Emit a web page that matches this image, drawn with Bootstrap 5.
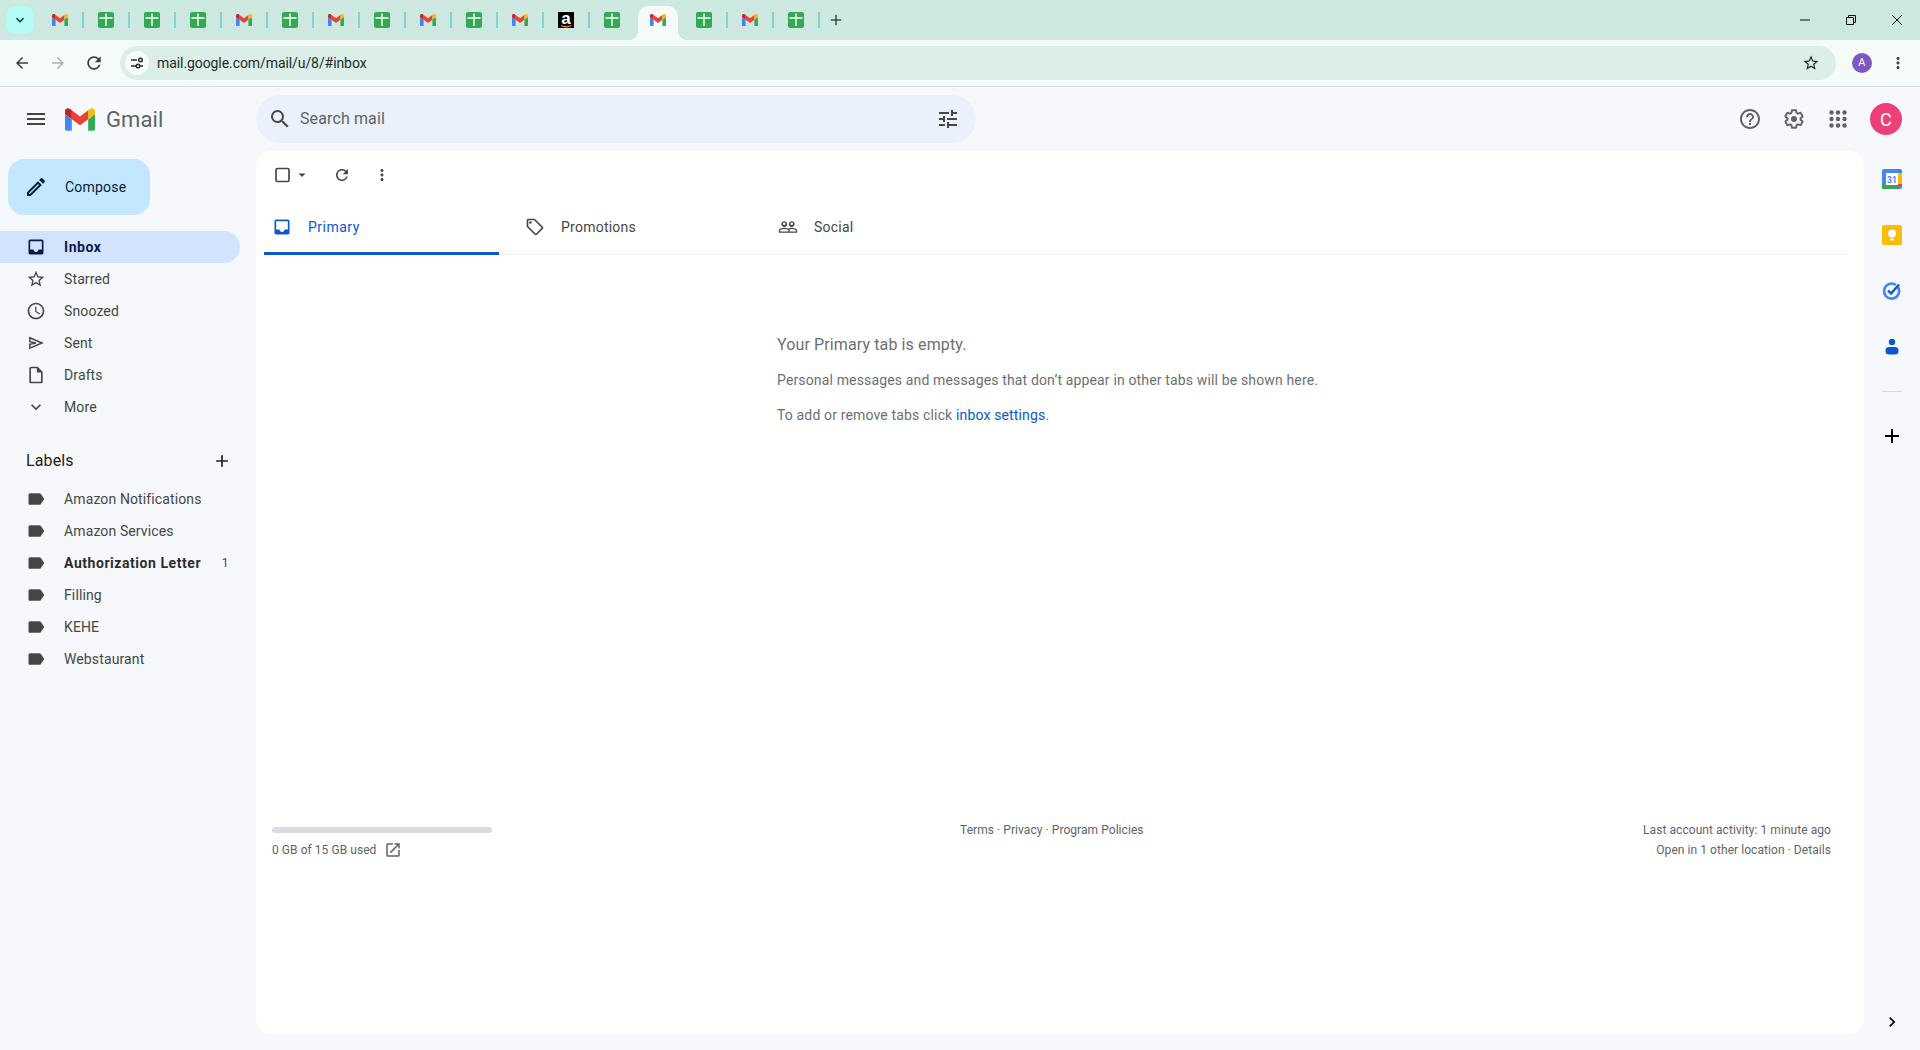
<!DOCTYPE html>
<html lang="en">
<head>
<meta charset="UTF-8">
<title>Inbox - Gmail</title>
<link href="https://cdn.jsdelivr.net/npm/bootstrap@5.3.0/dist/css/bootstrap.min.css" rel="stylesheet">
<style>
body { background: #f6f8fc; font-family: Roboto, "Liberation Sans", sans-serif; font-size: 14px; letter-spacing: .12px; color: #444746; height: 1050px; overflow: hidden; }
svg { display: block; flex: none; fill: currentColor; }

/* browser chrome */
.tabstrip { height: 40px; background: #cde8e1; padding-left: 37px; }
.tab-toggle { position: absolute; left: 6px; top: 6px; width: 28px; height: 28px; border-radius: 10px; background: #b3fcf3; color: #1f2a28; }
.tab-item { position: relative; width: 46px; height: 40px; }
.tab-item.with-sep::after { content: ""; position: absolute; right: -1px; top: 12px; width: 2px; height: 16px; background: #7bd8cd; }
.tab-item.is-current::before { content: ""; position: absolute; left: 3px; right: 3px; top: 6px; bottom: 0; background: #f4fbf8; border-radius: 10px 10px 0 0; }
.tab-item > svg { position: relative; z-index: 1; }
.amz-ico { position: relative; width: 16px; height: 16px; background: #000; color: #fff; font-family: "Liberation Sans", sans-serif; font-weight: 700; font-size: 17px; line-height: 14px; text-align: center; letter-spacing: 0; }
.amz-ico svg { position: absolute; left: 2px; bottom: 0; }
.flare { position: absolute; bottom: 0; width: 10px; height: 10px; }
.flare-l { left: -7px; background: radial-gradient(circle at 0 0, transparent 10px, #f4fbf8 10.5px); }
.flare-r { right: -7px; background: radial-gradient(circle at 100% 0, transparent 10px, #f4fbf8 10.5px); }
.tab-plus { width: 34px; color: #3f4b48; }
.win-btn { width: 46px; color: #111; }
.chromebar { height: 47px; background: #f4fbf8; border-bottom: 1px solid #d8e4df; border-radius: 8px 8px 0 0; color: #36423f; }
.nav-ico { width: 36px; }
.nav-ico.is-off { color: #a9b3b0; }
.omnibox { height: 34px; background: #dceee8; border-radius: 17px; margin-left: 8px; padding-left: 5px; width: 1716px; letter-spacing: -.08px; color: #1f2a28; }
.site-chip { width: 24px; height: 24px; background: #f4fbf8; border-radius: 50%; margin-right: 8px; }
.site-chip svg { fill: none; }
.omni-star { margin-left: auto; margin-right: 16px; }
.acct-dot { width: 20px; height: 20px; border-radius: 50%; background: #7e57c2; color: #fff; font-size: 11px; margin-left: 16px; }
.chrome-menu { margin-left: 17px; }

/* gmail header */
.mail-top { height: 64px; }
.brand-zone { width: 256px; padding-left: 24px; }
.burger { color: #444746; margin-right: 17px; }
.wordmark { font-size: 22px; color: #5f6368; margin-left: 11px; }
.searchbox { width: 720px; height: 48px; background: #eaf1fb; border-radius: 24px; padding: 0 16px 0 12px; font-size: 16px; color: #5f6368; }
.searchbox .q-text { margin-left: 8px; }
.searchbox svg { fill: #444746; }
.top-actions { margin-left: auto; color: #5f6368; }
.top-act { width: 44px; }
.user-chip { width: 32px; height: 32px; border-radius: 50%; background: #ee3f79; color: #fff; font-size: 18px; margin: 0 18px 0 10px; }

/* sidebar */
.mail-side { width: 256px; flex: none; }
.compose-btn { width: 142px; height: 56px; margin: 8px 0 16px 8px; background: #c2e7ff; border-radius: 16px; color: #001d35; padding-left: 16px; gap: 17px; letter-spacing: .2px; }
.side-row { height: 32px; width: 240px; padding-left: 26px; gap: 18px; border-radius: 0 16px 16px 0; color: #444746; }
.side-row.is-active { background: #d3e3fd; color: #041e49; font-weight: 700; letter-spacing: .55px; }
.side-row.has-unread { font-weight: 700; color: #2b2d30; letter-spacing: .55px; }
.has-unread svg { color: #444746; }
.unread-num { margin-left: auto; margin-right: 11px; font-size: 12px; font-weight: 400; color: #444746; }
.labels-head { height: 40px; margin-top: 18px; margin-bottom: 2px; width: 240px; padding: 0 8px 0 26px; font-size: 16px; color: #1f1f1f; }

/* main card */
.mail-card { flex: 1; background: #fff; border-radius: 16px; margin-bottom: 16px; }
.mail-tools { height: 48px; padding-left: 19px; color: #444746; }
.tool-caret { margin-left: 1px; }
.tool-refresh { margin-left: 25px; }
.tool-more { margin-left: 22px; }
.mail-tabs { height: 56px; margin: 0 16px 0 8px; border-bottom: 1px solid #eceff1; }
.mail-tab { width: 235px; margin-right: 18px; height: 56px; padding-left: 8px; gap: 16px; color: #444746; letter-spacing: .24px; }
.mail-tab.is-active { color: #0b57d0; border-bottom: 3px solid #0b57d0; padding-top: 3px; letter-spacing: .5px; }
.empty-note { padding: 80px 0 0 521px; color: #6b6f74; line-height: 20px; letter-spacing: .15px; }
.empty-note p { margin: 0 0 15px; }
.empty-note .note-title { font-size: 16px; letter-spacing: .12px; }
.empty-note a { color: #0b57d0; text-decoration: none; }
.mail-foot { margin-top: 395px; padding-left: 16px; padding-right: 33px; font-size: 12px; letter-spacing: .06px; color: #5f6368; line-height: 20px; }
.quota-col { width: 220px; margin-right: 468px; }
.quota-bar { height: 6px; background: #dadce0; border-radius: 3px; margin-top: 7px; margin-bottom: 7px; }

/* right rail */
.mail-rail { width: 56px; flex: none; padding-bottom: 3px; margin-bottom: 15px; }
.rail-app { height: 56px; width: 52px; }
.rail-line { width: 20px; height: 1px; background: #dadce0; margin: 16px 16px 32px; }
</style>
</head>
<body class="d-flex flex-column position-relative">

<svg width="0" height="0" class="position-absolute">
  <symbol id="i-gmail" viewBox="52 42 88 66">
    <path fill="#4285f4" d="M58 108h14V74L52 59v43c0 3.32 2.69 6 6 6"/>
    <path fill="#34a853" d="M120 108h14c3.32 0 6-2.69 6-6V59l-20 15"/>
    <path fill="#fbbc04" d="M120 48v26l20-15v-8c0-7.42-8.47-11.65-14.4-7.2"/>
    <path fill="#ea4335" d="M72 74V48l24 18 24-18v26L96 92"/>
    <path fill="#c5221f" d="M52 51v8l20 15V48l-5.6-4.2c-5.94-4.45-14.4-.22-14.4 7.2"/>
  </symbol>
  <symbol id="i-sheet" viewBox="0 0 16 16">
    <rect width="16" height="16" rx="2" fill="#34a853"/>
    <path fill="#fff" d="M7.3 1.5h1.4v3.8h5.8v1.4H8.7V14H7.3V6.7H1.5V5.3h5.8z"/>
  </symbol>
  <symbol id="i-star" viewBox="0 0 24 24"><path d="M22 9.24l-7.19-.62L12 2 9.19 8.63 2 9.24l5.46 4.73L5.82 21 12 17.27 18.18 21l-1.63-7.03L22 9.24zM12 15.4l-3.76 2.27 1-4.28-3.32-2.88 4.38-.38L12 6.1l1.71 4.04 4.38.38-3.32 2.88 1 4.28L12 15.4z"/></symbol>
  <symbol id="i-inbox" viewBox="0 0 24 24"><path d="M19 3H5c-1.1 0-2 .9-2 2v14c0 1.1.9 2 2 2h14c1.1 0 2-.9 2-2V5c0-1.1-.9-2-2-2zm0 12h-4c0 1.66-1.35 3-3 3s-3-1.34-3-3H5V5h14v10z"/></symbol>
  <symbol id="i-label" viewBox="0 0 24 24"><path d="M17.63 5.84C17.27 5.33 16.67 5 16 5L5 5.01C3.9 5.01 3 5.9 3 7v10c0 1.1.9 1.99 2 1.99L16 19c.67 0 1.27-.33 1.63-.84L22 12l-4.37-6.16z"/></symbol>
  <symbol id="i-add" viewBox="0 0 24 24"><path d="M19 13h-6v6h-2v-6H5v-2h6V5h2v6h6v2z"/></symbol>
  <symbol id="i-dots" viewBox="0 0 24 24"><path d="M12 8c1.1 0 2-.9 2-2s-.9-2-2-2-2 .9-2 2 .9 2 2 2zm0 2c-1.1 0-2 .9-2 2s.9 2 2 2 2-.9 2-2-.9-2-2-2zm0 6c-1.1 0-2 .9-2 2s.9 2 2 2 2-.9 2-2-.9-2-2-2z"/></symbol>
  <symbol id="i-reload" viewBox="0 0 24 24"><path d="M17.65 6.35C16.2 4.9 14.21 4 12 4c-4.42 0-7.99 3.58-7.99 8s3.57 8 7.99 8c3.73 0 6.84-2.55 7.73-6h-2.08c-.82 2.33-3.04 4-5.65 4-3.31 0-6-2.69-6-6s2.69-6 6-6c1.66 0 3.14.69 4.22 1.78L13 11h7V4l-2.35 2.35z"/></symbol>
</svg>

<!-- tab strip -->
<div class="tabstrip d-flex align-items-center">
  <div class="tab-toggle d-flex align-items-center justify-content-center">
    <svg width="16" height="16" viewBox="0 0 24 24"><path d="M16.59 8.59L12 13.17 7.41 8.59 6 10l6 6 6-6z"/></svg>
  </div>
  <div class="tab-item with-sep d-flex align-items-center justify-content-center"><svg width="16" height="16"><use href="#i-gmail"/></svg></div>
  <div class="tab-item with-sep d-flex align-items-center justify-content-center"><svg width="16" height="16"><use href="#i-sheet"/></svg></div>
  <div class="tab-item with-sep d-flex align-items-center justify-content-center"><svg width="16" height="16"><use href="#i-sheet"/></svg></div>
  <div class="tab-item with-sep d-flex align-items-center justify-content-center"><svg width="16" height="16"><use href="#i-sheet"/></svg></div>
  <div class="tab-item with-sep d-flex align-items-center justify-content-center"><svg width="16" height="16"><use href="#i-gmail"/></svg></div>
  <div class="tab-item with-sep d-flex align-items-center justify-content-center"><svg width="16" height="16"><use href="#i-sheet"/></svg></div>
  <div class="tab-item with-sep d-flex align-items-center justify-content-center"><svg width="16" height="16"><use href="#i-gmail"/></svg></div>
  <div class="tab-item with-sep d-flex align-items-center justify-content-center"><svg width="16" height="16"><use href="#i-sheet"/></svg></div>
  <div class="tab-item with-sep d-flex align-items-center justify-content-center"><svg width="16" height="16"><use href="#i-gmail"/></svg></div>
  <div class="tab-item with-sep d-flex align-items-center justify-content-center"><svg width="16" height="16"><use href="#i-sheet"/></svg></div>
  <div class="tab-item with-sep d-flex align-items-center justify-content-center"><svg width="16" height="16"><use href="#i-gmail"/></svg></div>
  <div class="tab-item with-sep d-flex align-items-center justify-content-center">
    <div class="amz-ico">a<svg width="12" height="3" viewBox="0 0 12 3"><path d="M1 .6c3 1.5 7 1.5 10 0" fill="none" stroke="#f90" stroke-width="1.1"/></svg></div>
  </div>
  <div class="tab-item d-flex align-items-center justify-content-center"><svg width="16" height="16"><use href="#i-sheet"/></svg></div>
  <div class="tab-item is-current d-flex align-items-center justify-content-center">
    <span class="flare flare-l"></span><span class="flare flare-r"></span>
    <svg width="16" height="16"><use href="#i-gmail"/></svg>
  </div>
  <div class="tab-item with-sep d-flex align-items-center justify-content-center"><svg width="16" height="16"><use href="#i-sheet"/></svg></div>
  <div class="tab-item with-sep d-flex align-items-center justify-content-center"><svg width="16" height="16"><use href="#i-gmail"/></svg></div>
  <div class="tab-item with-sep d-flex align-items-center justify-content-center"><svg width="16" height="16"><use href="#i-sheet"/></svg></div>
  <div class="tab-plus d-flex justify-content-center"><svg width="18" height="18"><use href="#i-add"/></svg></div>

  <div class="ms-auto d-flex">
    <div class="win-btn d-flex justify-content-center"><svg width="12" height="12" viewBox="0 0 12 12"><path d="M1 6h10" stroke="currentColor" fill="none"/></svg></div>
    <div class="win-btn d-flex justify-content-center"><svg width="12" height="12" viewBox="0 0 12 12"><path d="M1.5 3.5h7v7h-7zM3.5 3.5v-2h7v7h-2" stroke="currentColor" fill="none"/></svg></div>
    <div class="win-btn d-flex justify-content-center"><svg width="12" height="12" viewBox="0 0 12 12"><path d="M1 1l10 10M11 1L1 11" stroke="currentColor" fill="none"/></svg></div>
  </div>
</div>

<!-- address bar -->
<div class="chromebar d-flex align-items-center ps-1">
  <div class="nav-ico d-flex justify-content-center"><svg width="18" height="18" viewBox="0 0 24 24"><path d="M20 11H7.83l5.59-5.59L12 4l-8 8 8 8 1.41-1.41L7.83 13H20v-2z"/></svg></div>
  <div class="nav-ico is-off d-flex justify-content-center"><svg width="18" height="18" viewBox="0 0 24 24"><path d="M12 4l-1.41 1.41L16.17 11H4v2h12.17l-5.58 5.59L12 20l8-8z"/></svg></div>
  <div class="nav-ico d-flex justify-content-center"><svg width="20" height="20"><use href="#i-reload"/></svg></div>
  <div class="omnibox d-flex align-items-center">
    <span class="site-chip d-flex align-items-center justify-content-center">
      <svg width="14" height="14" viewBox="0 0 14 14" stroke="currentColor" stroke-width="1.4"><path d="M1 4h6M10 10h3M1 10h5"/><circle cx="10.5" cy="4" r="1.8"/><circle cx="8" cy="10" r="1.8"/></svg>
    </span>
    <span>mail.google.com/mail/u/8/#inbox</span>
    <svg class="omni-star" width="18" height="18"><use href="#i-star"/></svg>
  </div>
  <span class="acct-dot d-flex align-items-center justify-content-center">A</span>
  <svg class="chrome-menu" width="18" height="18"><use href="#i-dots"/></svg>
</div>

<!-- gmail header -->
<header class="mail-top d-flex align-items-center">
  <div class="brand-zone d-flex align-items-center">
    <svg class="burger" width="24" height="24" viewBox="0 0 24 24"><path d="M3 18h18v-2H3v2zm0-5h18v-2H3v2zm0-7v2h18V6H3z"/></svg>
    <svg width="30" height="23"><use href="#i-gmail"/></svg>
    <span class="wordmark">Gmail</span>
  </div>
  <div class="searchbox d-flex align-items-center">
    <svg width="24" height="24" viewBox="0 0 24 24"><path d="M15.5 14h-.79l-.28-.27A6.47 6.47 0 0 0 16 9.5 6.5 6.5 0 1 0 9.5 16c1.61 0 3.09-.59 4.23-1.57l.27.28v.79l5 4.99L20.49 19l-4.99-5zm-6 0C7.01 14 5 11.99 5 9.5S7.01 5 9.5 5 14 7.01 14 9.5 11.99 14 9.5 14z"/></svg>
    <span class="q-text">Search mail</span>
    <svg class="ms-auto" width="24" height="24" viewBox="0 0 24 24"><path d="M3 17v2h6v-2H3zM3 5v2h10V5H3zm10 16v-2h8v-2h-8v-2h-2v6h2zM7 9v2H3v2h4v2h2V9H7zm14 4v-2H11v2h10zm-6-4h2V7h4V5h-4V3h-2v6z"/></svg>
  </div>
  <div class="top-actions d-flex align-items-center">
    <div class="top-act d-flex justify-content-center"><svg width="24" height="24" viewBox="0 0 24 24"><path d="M11 18h2v-2h-2v2zm1-16C6.48 2 2 6.48 2 12s4.48 10 10 10 10-4.48 10-10S17.52 2 12 2zm0 18c-4.41 0-8-3.59-8-8s3.59-8 8-8 8 3.59 8 8-3.59 8-8 8zm0-14c-2.21 0-4 1.79-4 4h2c0-1.1.9-2 2-2s2 .9 2 2c0 2-3 1.75-3 5h2c0-2.25 3-2.5 3-5 0-2.21-1.79-4-4-4z"/></svg></div>
    <div class="top-act d-flex justify-content-center"><svg width="24" height="24" viewBox="0 0 24 24"><g transform="translate(1.4 1.4) scale(.883)"><path fill="none" stroke="currentColor" stroke-width="2.2" d="M19.43 12.98c.04-.32.07-.64.07-.98s-.03-.66-.07-.98l2.11-1.65c.19-.15.24-.42.12-.64l-2-3.46c-.12-.22-.39-.3-.61-.22l-2.49 1c-.52-.4-1.08-.73-1.69-.98l-.38-2.65C14.46 2.18 14.25 2 14 2h-4c-.25 0-.46.18-.49.42l-.38 2.65c-.61.25-1.17.59-1.69.98l-2.49-1c-.23-.09-.49 0-.61.22l-2 3.46c-.13.22-.07.49.12.64l2.11 1.65c-.04.32-.07.65-.07.98s.03.66.07.98l-2.11 1.65c-.19.15-.24.42-.12.64l2 3.46c.12.22.39.3.61.22l2.49-1c.52.4 1.08.73 1.69.98l.38 2.65c.03.24.24.42.49.42h4c.25 0 .46-.18.49-.42l.38-2.65c.61-.25 1.17-.59 1.69-.98l2.49 1c.23.09.49 0 .61-.22l2-3.46c.12-.22.07-.49-.12-.64l-2.11-1.65z"/></g><circle cx="12" cy="12" r="3"/></svg></div>
    <div class="top-act d-flex justify-content-center"><svg width="24" height="24" viewBox="0 0 24 24"><circle cx="5.5" cy="5.5" r="2.2"/><circle cx="12" cy="5.5" r="2.2"/><circle cx="18.5" cy="5.5" r="2.2"/><circle cx="5.5" cy="12" r="2.2"/><circle cx="12" cy="12" r="2.2"/><circle cx="18.5" cy="12" r="2.2"/><circle cx="5.5" cy="18.5" r="2.2"/><circle cx="12" cy="18.5" r="2.2"/><circle cx="18.5" cy="18.5" r="2.2"/></svg></div>
    <span class="user-chip d-flex align-items-center justify-content-center">C</span>
  </div>
</header>

<div class="d-flex flex-grow-1 overflow-hidden">
  <!-- sidebar -->
  <aside class="mail-side">
    <div class="compose-btn d-flex align-items-center">
      <svg width="24" height="24" viewBox="0 0 24 24"><path d="M3 17.25V21h3.75L17.81 9.94l-3.75-3.75L3 17.25zM5.92 19H5v-.92l9.06-9.06.92.92L5.92 19zM20.71 5.63l-2.34-2.34c-.2-.2-.45-.29-.71-.29s-.51.1-.7.29l-1.83 1.83 3.75 3.75 1.83-1.83c.39-.39.39-1.02 0-1.41z"/></svg>
      <span>Compose</span>
    </div>
    <div class="side-row is-active d-flex align-items-center"><svg width="20" height="20"><use href="#i-inbox"/></svg><span>Inbox</span></div>
    <div class="side-row d-flex align-items-center"><svg width="20" height="20"><use href="#i-star"/></svg><span>Starred</span></div>
    <div class="side-row d-flex align-items-center"><svg width="20" height="20" viewBox="0 0 24 24"><path d="M11.99 2C6.47 2 2 6.48 2 12s4.47 10 9.99 10C17.52 22 22 17.52 22 12S17.52 2 11.99 2zM12 20c-4.42 0-8-3.58-8-8s3.58-8 8-8 8 3.58 8 8-3.58 8-8 8zm.5-13H11v6l5.25 3.15.75-1.23-4.5-2.67z"/></svg><span>Snoozed</span></div>
    <div class="side-row d-flex align-items-center"><svg width="20" height="20" viewBox="0 0 20 20"><path d="M3.8 4.8 16 10 3.8 15.2V11.3L10 10 3.8 8.7z" fill="none" stroke="currentColor" stroke-width="1.5"/></svg><span>Sent</span></div>
    <div class="side-row d-flex align-items-center"><svg width="20" height="20" viewBox="0 0 24 24"><path d="M14 2H6c-1.1 0-1.99.9-1.99 2L4 20c0 1.1.89 2 1.99 2H18c1.1 0 2-.9 2-2V8l-6-6zm4 18H6V4h7v5h5v11z"/></svg><span>Drafts</span></div>
    <div class="side-row d-flex align-items-center"><svg width="20" height="20" viewBox="0 0 24 24"><path d="M16.59 8.59L12 13.17 7.41 8.59 6 10l6 6 6-6z"/></svg><span>More</span></div>

    <div class="labels-head d-flex align-items-center justify-content-between">
      <span>Labels</span>
      <svg width="20" height="20"><use href="#i-add"/></svg>
    </div>
    <div class="side-row d-flex align-items-center"><svg width="20" height="20"><use href="#i-label"/></svg><span>Amazon Notifications</span></div>
    <div class="side-row d-flex align-items-center"><svg width="20" height="20"><use href="#i-label"/></svg><span>Amazon Services</span></div>
    <div class="side-row has-unread d-flex align-items-center"><svg width="20" height="20"><use href="#i-label"/></svg><span>Authorization Letter</span><span class="unread-num">1</span></div>
    <div class="side-row d-flex align-items-center"><svg width="20" height="20"><use href="#i-label"/></svg><span>Filling</span></div>
    <div class="side-row d-flex align-items-center"><svg width="20" height="20"><use href="#i-label"/></svg><span>KEHE</span></div>
    <div class="side-row d-flex align-items-center"><svg width="20" height="20"><use href="#i-label"/></svg><span>Webstaurant</span></div>
  </aside>

  <!-- main card -->
  <main class="mail-card">
    <div class="mail-tools d-flex align-items-center">
      <svg width="20" height="20" viewBox="0 0 20 20"><rect x="1" y="3.5" width="13" height="13" rx="1.5" fill="none" stroke="currentColor" stroke-width="1.7"/></svg>
      <svg class="tool-caret" width="12" height="12" viewBox="0 0 12 12"><path d="M2.5 4.5h7L6 8z"/></svg>
      <svg class="tool-refresh" width="18" height="18"><use href="#i-reload"/></svg>
      <svg class="tool-more" width="18" height="18"><use href="#i-dots"/></svg>
    </div>
    <div class="mail-tabs d-flex">
      <div class="mail-tab is-active d-flex align-items-center"><svg width="20" height="20"><use href="#i-inbox"/></svg><span>Primary</span></div>
      <div class="mail-tab d-flex align-items-center"><svg width="20" height="20" viewBox="0 0 24 24"><path d="M21.41 11.58l-9-9C12.05 2.22 11.55 2 11 2H4c-1.1 0-2 .9-2 2v7c0 .55.22 1.05.59 1.42l9 9c.36.36.86.58 1.41.58s1.05-.22 1.41-.59l7-7c.37-.36.59-.86.59-1.41s-.23-1.06-.59-1.42zM13 20.01L4 11V4h7v-.01l9 8.99-7 7.02z"/><circle cx="6.5" cy="6.5" r="1.5"/></svg><span>Promotions</span></div>
      <div class="mail-tab d-flex align-items-center"><svg width="20" height="20" viewBox="0 0 24 24"><path d="M16.5 13c-1.2 0-3.07.34-4.5 1-1.43-.67-3.3-1-4.5-1C5.33 13 1 14.08 1 16.25V19h22v-2.75c0-2.17-4.33-3.25-6.5-3.25zm-4 4.5h-10v-1.25c0-.54 2.56-1.75 5-1.75s5 1.21 5 1.75v1.25zm9 0H14v-1.25c0-.46-.2-.86-.52-1.22.88-.3 1.96-.53 3.02-.53 2.44 0 5 1.21 5 1.75v1.25zM7.5 12c1.93 0 3.5-1.57 3.5-3.5S9.43 5 7.5 5 4 6.57 4 8.5 5.57 12 7.5 12zm0-5.5c.83 0 1.5.67 1.5 1.5s-.67 1.5-1.5 1.5S6 8.83 6 8s.67-1.5 1.5-1.5zm9 5.5c1.93 0 3.5-1.57 3.5-3.5S18.43 5 16.5 5 13 6.57 13 8.5s1.57 3.5 3.5 3.5zm0-5.5c.83 0 1.5.67 1.5 1.5s-.67 1.5-1.5 1.5S15 8.83 15 8s.67-1.5 1.5-1.5z"/></svg><span>Social</span></div>
    </div>
    <div class="empty-note">
      <p class="note-title">Your Primary tab is empty.</p>
      <p>Personal messages and messages that don’t appear in other tabs will be shown here.</p>
      <p>To add or remove tabs click <a href="#">inbox settings</a>.</p>
    </div>
    <div class="mail-foot d-flex">
      <div class="quota-col">
        <div class="quota-bar"></div>
        <div class="d-flex align-items-center gap-2">0 GB of 15 GB used <svg width="18" height="18" viewBox="0 0 24 24"><path d="M19 19H5V5h7V3H5c-1.11 0-2 .9-2 2v14c0 1.1.89 2 2 2h14c1.1 0 2-.9 2-2v-7h-2v7zM14 3v2h3.59l-9.83 9.83 1.41 1.41L19 6.41V10h2V3h-7z"/></svg></div>
      </div>
      <div>Terms · Privacy · Program Policies</div>
      <div class="ms-auto text-end">Last account activity: 1 minute ago<br>Open in 1 other location · Details</div>
    </div>
  </main>

  <!-- right rail -->
  <aside class="mail-rail d-flex flex-column align-items-center">
    <div class="rail-app d-flex align-items-center justify-content-center">
      <svg width="20" height="20" viewBox="0 0 20 20"><rect width="20" height="20" rx="2" fill="#4285f4"/><rect x="15" y="4" width="5" height="11" fill="#fbbc04"/><rect y="15" width="15" height="5" fill="#34a853"/><path d="M15 15h5l-5 5z" fill="#ea4335"/><rect x="4" y="4" width="12" height="12" fill="#fff"/><text x="10" y="13.5" text-anchor="middle" font-family="Roboto" font-weight="700" font-size="8.5" fill="#4285f4">31</text></svg>
    </div>
    <div class="rail-app d-flex align-items-center justify-content-center">
      <svg width="20" height="20" viewBox="0 0 20 20"><rect width="20" height="20" rx="2" fill="#fbbc04"/><circle cx="10" cy="8.5" r="4" fill="#fff"/><rect x="8" y="13.5" width="4" height="2" rx=".6" fill="#fff"/></svg>
    </div>
    <div class="rail-app d-flex align-items-center justify-content-center">
      <svg width="20" height="20" viewBox="0 0 20 20"><path d="M16 6.2A7.5 7.5 0 1 1 13.8 3.9" fill="none" stroke="#4285f4" stroke-width="2.6"/><path d="M6 9.5l3 3 8-9" fill="none" stroke="#0b57d0" stroke-width="2.4"/></svg>
    </div>
    <div class="rail-app d-flex align-items-center justify-content-center">
      <svg width="20" height="20" viewBox="0 0 20 20"><circle cx="10" cy="5" r="3.2" fill="#0b57d0"/><rect x="3.5" y="10" width="13" height="7.5" rx="3.5" fill="#0b57d0"/></svg>
    </div>
    <div class="rail-line"></div>
    <div class="d-flex justify-content-center text-black"><svg width="24" height="24"><use href="#i-add"/></svg></div>
    <div class="mt-auto d-flex justify-content-center text-black"><svg width="20" height="20" viewBox="0 0 24 24"><path d="M10 6L8.59 7.41 13.17 12l-4.58 4.59L10 18l6-6z"/></svg></div>
  </aside>
</div>
</body>
</html>
